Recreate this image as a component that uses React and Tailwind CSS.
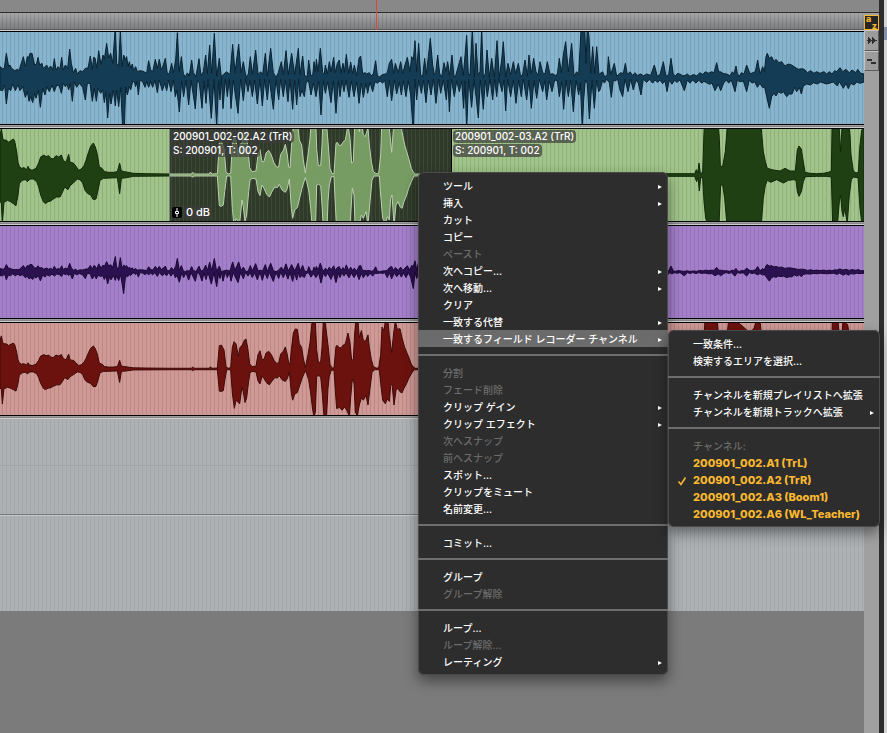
import { useMemo } from "react";
import clsx from "clsx";

// Envelopes are sampled at three units per pixel. Each list holds "x,y" pairs.
const parse = (text, start, mid) =>
  text
    .trim()
    .split(/\s+/)
    .map((pair) => {
      const [x, y] = pair.split(",").map(Number);
      return [x + start, Math.abs(y - mid)];
    });

// Pulls the quiet samples towards the centre line so the peaks stand apart
const sharpen = ([x, h]) => [x, x > 500 && x < 2260 && h < 36 ? h * 0.55 : h];

const VOICE_TOP = [
  ...parse(
    `0,200 8,206 13,205 19,160 26,200 30,195 34,204 44,212 52,208 57,212 70,170 76,200 82,170 86,172 90,160 96,160
     100,178 104,196 110,190 114,172 119,195 126,190 130,206 140,195 145,206 152,198 158,210 163,176 168,210 174,200
     180,206 185,172 190,210 196,195 203,205 209,147 214,190 220,218 227,205 232,222 240,212 248,215 256,205 264,204
     271,168 277,208 281,172 285,174 291,205 296,152 303,194 309,165 313,178 320,130 326,174 332,160 338,190 346,80
     350,190 356,200 361,90 366,200 371,165 376,178 380,170 384,200 388,185 392,205 397,192 401,212 407,200 412,215
     420,212 430,214 440,220 446,182 452,210 458,215 466,178 472,205 478,178 484,210 490,195 496,175 502,212 508,210
     515,190 520,205 527,180 532,98 538,200 544,170 550,210 556,228 562,206 568,222 575,180 580,205 588,225 597,176
     603,220 610,200 617,165 622,210 629,135 635,210 643,100 650,225 658,175 664,230 670,215 680,200 690,215 698,133
     705,205 716,132 723,205 730,185 738,230 745,212 751,170 757,215 767,150 774,215 782,200 788,215 796,160 802,225
     812,145 820,205 828,230 835,205 844,185 850,215 858,152 865,215 875,160 884,215 895,145`,
    0, 234
  ),
  ...parse(
    `0,215 8,168 14,220 22,228 26,180 32,218 38,222 42,185 46,200 49,178 54,200 61,145 68,205 73,212 76,195 82,212
     88,185 93,200 101,172 106,205 112,190 118,180 123,208 129,190 133,205 139,163 146,210 152,186 158,210 163,195
     170,220 177,175 182,168 188,210 195,205 200,212 208,205 213,222 220,212 227,182 232,220 238,228 248,215 256,212
     262,205 268,190 275,178 281,210 286,190 295,205 302,185 308,210 315,195 322,172 330,200 335,170 340,180 345,122
     350,200 356,130 362,218 368,225 374,175 379,215 385,170 391,115 398,195 403,215 407,205 413,165 419,210 425,228
     432,188 438,200 443,185 449,220 456,165 462,230 468,215 476,195 483,170 490,220 500,106 505,215 510,215 517,85
     523,230 528,130 534,215 540,200 545,85 550,232 556,210 561,150 568,230 575,175 583,230 591,122 598,230 605,180
     610,125 617,230 624,190 632,215 640,185 647,210 655,190 661,215 667,225 675,180 682,225 687,165 694,210 701,175
     708,200 714,220 720,185 728,205 735,212 742,185 750,215 758,210 765,220 772,215 778,175 784,205 790,165 797,125
     805,200 815,130 822,225 830,200 836,215 843,90 849,80 854,80 858,190 862,80 867,110 872,210 878,140 884,210
     890,140 897,215`,
    900, 234
  ),
  ...parse(
    `0,210 8,200 14,228 22,215 25,170 32,215 43,190 50,225 62,205 70,210 76,190 82,215 90,200 98,220 105,205 112,220
     122,212 130,222 140,212 152,220 163,195 172,225 180,215 190,185 198,225 206,215 213,175 220,215 226,222 232,210
     240,212 248,222 255,220 262,212 270,225 280,215 290,222 300,205 308,215 316,200 325,208 335,200 342,205 350,188
     356,200 362,200 370,210 380,212 390,222 397,200 402,212 408,198 412,210 418,225 424,205 432,212 440,195 450,212
     458,205 466,215 473,180 480,222 488,200 493,215 498,170 502,160 508,175 515,170 522,185 528,178 536,188 545,185
     555,198 565,192 575,195 585,202 595,208 605,206 613,208 622,218 632,212 642,220 650,215 660,220 672,215 680,222
     688,215 696,222 704,212 710,215 720,203 728,215 738,208 748,218 756,210 768,218 773,208 782,220 792,222`,
    1800, 234
  ),
].map(sharpen);

const VOICE_BOTTOM = [
  ...parse(
    `0,270 8,272 14,255 19,312 25,265 32,272 38,252 46,272 54,254 60,272 68,260 76,292 82,275 87,304 92,290 98,308
     104,280 108,295 115,270 121,322 128,265 135,285 140,260 148,275 156,255 163,275 170,255 178,258 184,280 190,250
     196,260 201,252 206,270 211,250 217,304 223,245 230,262 238,250 248,262 256,300 262,250 270,250 277,304 283,265
     289,304 294,265 302,280 308,270 313,308 318,275 323,354 329,280 333,312 340,270 346,318 350,270 356,320 362,262
     371,450 377,260 382,285 388,260 392,270 398,245 403,245 407,260 411,245 415,285 420,240 428,245 435,262 440,245
     446,262 452,245 458,262 465,240 472,278 478,240 487,272 494,250 500,272 506,245 513,275 520,245 526,290 531,270
     538,336 545,250 551,290 558,245 566,315 573,245 579,280 586,327 592,245 598,262 606,325 612,250 618,310 624,240
     634,355 642,240 650,380 656,250 660,300 664,236 669,326 676,240 682,290 688,240 693,326 700,245 706,285 714,340
     722,240 730,302 737,238 744,275 750,245 757,290 764,245 772,312 780,240 787,318 794,240 802,300 808,240 820,328
     828,240 836,300 842,240 850,290 856,245 864,305 870,240 878,328 884,245 890,315 896,240`,
    0, 234
  ),
  ...parse(
    `0,290 6,270 13,290 18,262 25,245 33,285 40,262 48,290 56,250 63,345 70,250 76,280 83,255 93,308 100,250 108,340
     115,250 120,290 126,245 132,275 138,245 147,292 154,250 162,290 170,255 177,310 184,262 190,292 198,260 203,280
     210,255 218,275 225,255 232,262 240,250 248,262 254,245 262,290 268,245 275,302 283,245 290,282 298,255 304,285
     310,250 318,290 325,250 332,285 340,400 345,240 350,300 356,245 364,280 370,245 378,308 385,245 393,285 400,240
     408,310 416,240 422,280 430,245 439,300 444,245 448,335 454,240 463,290 470,250 478,275 485,250 491,325 495,250
     500,390 506,240 515,322 522,240 528,290 535,354 541,245 550,328 556,245 562,290 570,236 578,300 584,240 590,290
     596,236 606,275 612,245 617,333 623,240 632,290 640,245 648,310 656,245 664,290 670,240 680,300 687,245 694,325
     702,245 710,295 718,240 728,275 734,250 740,300 748,250 756,275 764,245 772,250 778,290 785,255 791,328 798,245
     805,290 812,245 820,335 828,245 836,285 841,260 847,390 851,300 856,245 862,265 868,357 876,245 883,325 890,245
     896,275`,
    900, 234
  ),
  ...parse(
    `0,270 8,245 13,262 20,240 28,260 34,292 40,245 46,250 53,240 60,270 68,290 75,240 84,275 92,240 100,270 108,245
     115,262 123,285 130,240 140,258 148,242 158,262 165,245 173,258 180,245 188,265 195,250 201,275 208,245 216,268
     224,245 230,258 240,245 253,272 262,245 270,262 278,245 288,262 296,245 305,262 312,252 320,260 328,268 336,262
     345,272 355,268 362,272 372,258 380,245 386,262 394,245 405,275 412,245 420,255 430,250 440,275 448,245 456,262
     464,245 472,262 480,250 487,262 494,262 500,290 508,325 515,290 522,280 528,288 535,275 543,280 550,275 560,290
     568,282 576,282 584,262 590,275 598,262 604,282 610,258 620,252 632,255 640,248 652,252 662,246 680,252 700,246
     712,258 718,245 730,265 738,250 745,266 752,250 762,255 770,246 780,250 792,246`,
    1800, 234
  ),
].map(sharpen);

const FIELD_TOP = [
  ...parse(
    `0,120 4,138 9,106 20,104 26,98 34,104 40,108 44,102 50,70 54,38 58,26 64,20 72,22 80,16 84,26 88,18 96,14 108,20
     116,36 122,54 132,60 138,55 146,58 152,50 160,48 168,58 176,54 184,60 190,44 198,38 206,62 210,38 220,36 228,26
     236,14 244,18 252,28 258,44 266,70 272,86 280,96 286,84 292,62 298,24 306,20 314,10 326,8 340,8 352,10 359,36
     364,12 374,10 384,8 400,5 440,4 508,3 574,3 577,7 580,7 583,3 628,3 631,9 636,3 652,4 658,97 664,100 672,80
     678,10 684,3 692,5 697,90 702,114 708,105 715,54 720,90 727,100 733,120 738,125 743,90 749,22 756,10 768,12
     774,60 780,76 786,40 792,40 798,66 806,74 814,60 822,36 830,24 836,24 842,62 850,74 856,92 862,60 866,24 870,22
     874,80 880,150 886,167 892,165 898,105`,
    0, 0
  ),
  ...parse(
    `5,90 10,45 16,6 24,60 30,110 36,195 46,200 50,80 55,28 62,28 66,90 70,195 76,190 84,100 90,20 96,4 102,4 108,95
     112,98 118,88 124,90 130,100 136,105 144,150 150,110 155,36 160,40 164,150 168,200 174,200 178,130 184,160
     190,120 196,115 204,142 208,90 214,40 220,10 228,4 236,4 242,60 246,175 252,160 256,200 264,200 268,140 275,68
     281,150 286,200 292,165 300,168 306,130 314,90 320,70 326,50 334,20 340,8 346,3 355,3`,
    900, 0
  ),
  ...parse(
    `204,4 284,4 289,16 293,6 297,36 301,6 308,6 312,130 315,205 351,205 358,110 361,26 368,26 376,70 382,150 386,205
     405,200 422,185 438,165 450,150 462,170 470,205 480,205 485,125 490,70 496,40 502,20 520,15 540,12 555,20 570,12
     586,12 592,76 597,87 604,78 610,40 615,8 630,5 650,4 670,5 685,8 694,12 697,200 714,200 722,70 729,200 743,185
     750,120 753,60 760,12 768,6 775,8 779,80 785,135 792,140`,
    1800, 0
  ),
];

const FIELD_BOTTOM = [
  ...parse(
    `0,80 4,84 7,146 12,82 22,76 32,80 40,86 48,92 54,60 58,26 66,16 76,14 82,20 90,12 100,12 110,20 116,36 122,60
     130,80 136,86 144,80 152,78 160,72 170,66 180,66 188,50 194,36 204,44 210,32 220,24 232,12 240,14 248,24 256,48
     264,56 272,60 280,74 288,72 294,46 300,16 310,10 352,8 359,56 364,10 380,8 400,4 508,3 574,3 578,7 582,3 652,3
     658,92 664,94 670,90 674,50 680,3 692,3 697,100 703,164 708,130 714,138 719,145 726,75 730,95 735,140 740,120
     746,50 750,15 756,10 768,12 774,50 780,62 786,30 792,40 800,58 808,66 816,50 824,36 832,38 838,28 846,45 856,52
     862,40 868,12 874,100 878,130 884,105 892,98`,
    0, 0
  ),
  ...parse(
    `0,65 6,40 12,20 16,8 20,20 26,45 32,100 38,170 42,200 46,180 50,30 56,28 62,32 66,90 72,195 80,190 84,80 88,30
     94,5 102,5 106,90 110,165 118,160 126,172 134,158 140,172 148,195 152,120 157,40 162,60 166,180 172,195 178,150
     184,120 190,130 198,110 204,150 210,80 216,15 222,3 238,3 242,60 248,130 256,145 262,125 268,135 272,70 276,60
     282,150 288,90 294,80 300,95 306,100 312,80 320,60 326,40 334,20 342,3 355,3`,
    900, 0
  ),
  ...parse(
    `204,4 284,4 290,20 294,6 298,48 302,8 308,8 312,80 317,130 322,145 357,150 362,30 368,30 374,70 380,140 484,145
     490,70 496,30 502,16 512,22 530,14 550,24 565,16 580,14 588,16 592,50 597,64 604,50 610,20 616,5 650,4 680,4
     694,6 698,150 712,150 718,80 722,60 726,110 730,125 734,100 742,145 748,60 754,14 760,6 774,8 780,100 786,150
     792,150`,
    1800, 0
  ),
];

const stripes =
  "bg-[repeating-linear-gradient(90deg,transparent_0_2px,#0000001b_2px_3px,transparent_3px_4px)]";

const emptyStripes =
  "bg-[repeating-linear-gradient(90deg,transparent_0_2px,#8d9cae66_2px_3px,transparent_3px_4px)]";

function Waveform({ top, bottom, scale = 1, from = 0, to = 2592, className }) {
  const d = useMemo(() => {
    const up = top.map(([x, h]) => `${x},${138 - h * scale}`);
    const down = [...bottom].reverse().map(([x, h]) => `${x},${138 + h * scale}`);
    return `M${[...up, ...down].join("L")}Z`;
  }, [top, bottom, scale]);

  return (
    <svg
      viewBox={`${from} 0 ${to - from} 276`}
      preserveAspectRatio="none"
      className="block h-full w-full"
      aria-hidden="true"
    >
      <path d={d} className={className} strokeWidth="1" vectorEffect="non-scaling-stroke" />
    </svg>
  );
}

function Tag({ children }) {
  return <span className="rounded-sm bg-[#3c3c3c]/70 px-0.5">{children}</span>;
}

function ClipLabel({ name, take }) {
  return (
    <div className="absolute left-0 top-0 flex flex-col items-start gap-px pl-px pt-px text-[10px] font-medium leading-[13px] whitespace-nowrap text-white">
      <Tag>{name}</Tag>
      <Tag>{take}</Tag>
    </div>
  );
}

function Lane({ className, children }) {
  return (
    <div>
      <div className={clsx("flex h-[94px] border-y border-black", className)}>{children}</div>
      <div className="h-[3px] border-b border-[#cccccc] bg-linear-to-b from-[#a6a6a6] to-[#7c7c7c]" />
    </div>
  );
}

function Timeline() {
  return (
    <main className="min-w-0 flex-1">
      <div className="relative">
        <div className="h-3 bg-[#888888]" />
        <div className="h-[18px] border-t border-b border-t-[#2c2c2c] border-b-[#5a5a5a] bg-linear-to-b from-[#a4a6a8] to-[#7c7e80]">
          <div className={clsx("h-full", stripes)} />
        </div>
        <div className="absolute left-[376px] top-0 h-[30px] w-px bg-[#e0453c]" />
      </div>
      <div className="h-px bg-[#d0d0d0]" />

      <Lane className={clsx("bg-[#87b5cf]", stripes)}>
        <Waveform top={VOICE_TOP} bottom={VOICE_BOTTOM} className="fill-[#143c54] stroke-[#0a2230]" />
      </Lane>

      <Lane className={clsx("bg-[#a0c48a]", stripes)}>
        <div className="w-[169px]">
          <Waveform top={FIELD_TOP} bottom={FIELD_BOTTOM} to={507} className="fill-[#1f4013] stroke-[#12280a]" />
        </div>
        <div className="relative w-[282px] border-l border-[#77807a] bg-[#2f3a29]">
          <div className="h-full bg-[repeating-linear-gradient(90deg,transparent_0_1px,#ffffff12_1px_2px,transparent_2px_4px)]">
            <Waveform
              top={FIELD_TOP}
              bottom={FIELD_BOTTOM}
              from={510}
              to={1353}
              className="fill-[#769b63] stroke-[#bcd0b0]"
            />
          </div>
          <ClipLabel name="200901_002-02.A2 (TrR)" take="S: 200901, T: 002" />
          <div className="absolute bottom-0.5 left-0.5 flex items-center gap-0.5 text-[11px] font-medium leading-[13px] text-white">
            <svg viewBox="0 0 10 11" className="h-[11px] w-2.5 rounded-xs bg-black" aria-hidden="true">
              <path d="M5 1v3M5 7v3M3.500 4.500h3v2h-3z" className="fill-none stroke-white" />
            </svg>
            <Tag>0 dB</Tag>
          </div>
        </div>
        <div className="relative min-w-0 flex-1 border-l border-black">
          <Waveform
            top={FIELD_TOP}
            bottom={FIELD_BOTTOM}
            from={1356}
            className="fill-[#1f4013] stroke-[#12280a]"
          />
          <ClipLabel name="200901_002-03.A2 (TrR)" take="S: 200901, T: 002" />
        </div>
      </Lane>

      <Lane className={clsx("bg-[#a47fcb]", stripes)}>
        <Waveform top={VOICE_TOP} bottom={VOICE_BOTTOM} scale={0.3} className="fill-[#2c1150] stroke-[#1a0832]" />
      </Lane>

      <Lane className={clsx("bg-[#d09996]", stripes)}>
        <Waveform top={FIELD_TOP} bottom={FIELD_BOTTOM} scale={0.72} className="fill-[#6c120e] stroke-[#3c0a08]" />
      </Lane>

      <div className={clsx("h-24 border-b border-[#777a7c] bg-[#aeb0b1]", emptyStripes)}>
        <div className="h-[47px] border-b border-[#a0a2a4]" />
      </div>
      <div className={clsx("h-24 border-t border-[#c4c6c7] bg-[#aeb0b1]", emptyStripes)} />
    </main>
  );
}

function SideBar() {
  return (
    <aside className="w-[15px] shrink-0 bg-[#a0a0a0]">
      <div className="h-3 bg-[#888888]" />
      <div className="h-[3px] border-t border-[#2c2c2c]" />
      <button
        aria-label="Sort"
        className="flex h-[15px] w-full justify-between border border-[#f5b52c] bg-[#262626] px-px text-[9px] font-extrabold leading-[6px] text-[#f5b52c]"
      >
        <span>a</span>
        <span className="self-end">z</span>
      </button>
      <button
        aria-label="Transients"
        className="block h-[21px] w-full border border-[#c4c4c4] border-b-[#5c5c5c] border-r-[#5c5c5c] bg-[#9c9c9c]"
      >
        <svg viewBox="0 0 13 19" className="block w-full" aria-hidden="true">
          <path d="M2 9.500h10M3.500 6v7M4.500 7v5M5.500 8v3M7.500 6v7M8.500 7v5M9.500 8v3" className="stroke-[#303030]" />
        </svg>
      </button>
      <button
        aria-label="Layered editing"
        className="block h-5 w-full border border-[#c4c4c4] border-b-[#5c5c5c] border-r-[#5c5c5c] bg-[#9c9c9c]"
      >
        <svg viewBox="0 0 13 18" className="block w-full" aria-hidden="true">
          <path d="M2 7h5v2H2zM6 10h5v2H6z" className="fill-[#303030]" />
        </svg>
      </button>
    </aside>
  );
}

const clipMenu = [
  [
    { label: "ツール", sub: true },
    { label: "挿入", sub: true },
    { label: "カット" },
    { label: "コピー" },
    { label: "ペースト", disabled: true },
    { label: "次へコピー...", sub: true },
    { label: "次へ移動...", sub: true },
    { label: "クリア" },
    { label: "一致する代替", sub: true },
    { label: "一致するフィールド レコーダー チャンネル", sub: true, active: true },
  ],
  [
    { label: "分割", disabled: true },
    { label: "フェード削除", disabled: true },
    { label: "クリップ ゲイン", sub: true },
    { label: "クリップ エフェクト", sub: true },
    { label: "次へスナップ", disabled: true },
    { label: "前へスナップ", disabled: true },
    { label: "スポット..." },
    { label: "クリップをミュート" },
    { label: "名前変更..." },
  ],
  [{ label: "コミット..." }],
  [{ label: "グループ" }, { label: "グループ解除", disabled: true }],
  [
    { label: "ループ..." },
    { label: "ループ解除...", disabled: true },
    { label: "レーティング", sub: true },
  ],
];

const channelMenu = [
  [{ label: "一致条件..." }, { label: "検索するエリアを選択..." }],
  [
    { label: "チャンネルを新規プレイリストへ拡張" },
    { label: "チャンネルを新規トラックへ拡張", sub: true },
  ],
  [
    { label: "チャンネル:", disabled: true },
    { label: "200901_002.A1 (TrL)", channel: true },
    { label: "200901_002.A2 (TrR)", channel: true, checked: true },
    { label: "200901_002.A3 (Boom1)", channel: true },
    { label: "200901_002.A6 (WL_Teacher)", channel: true },
  ],
];

function MenuItem({ item }) {
  return (
    <button
      role="menuitem"
      disabled={item.disabled}
      className={clsx(
        "relative flex h-[17px] w-full items-center justify-between pl-[25px] pr-1.5 pt-0.5 text-left whitespace-nowrap",
        item.active && "bg-[#6b6b6b]",
        item.disabled && "text-[#6c6c6c]",
        item.channel ? "text-[11px] font-extrabold text-[#f9b82f]" : "text-[10px] font-medium"
      )}
    >
      {item.checked && (
        <svg viewBox="0 0 10 10" className="absolute left-[9px] h-2.5 w-2.5" aria-hidden="true">
          <path d="M1.500 5.500L4 8.500L8.500 1.500" className="fill-none stroke-[#f9b82f]" strokeWidth="1.6" />
        </svg>
      )}
      <span>{item.label}</span>
      {item.sub && (
        <svg viewBox="0 0 4 4" className="h-1 w-1" aria-hidden="true">
          <path d="M0 0L4 2L0 4Z" className="fill-white" />
        </svg>
      )}
    </button>
  );
}

function Menu({ groups, className }) {
  return (
    <div
      role="menu"
      className={clsx(
        "absolute rounded-md bg-[#2d2d2d] py-[5px] text-white shadow-[inset_0_0_0_1px_#4a4a4a,0_6px_14px_#00000070]",
        className
      )}
    >
      {groups.map((group, index) => (
        <div key={index}>
          {index > 0 && (
            <div className="h-[17px] pt-[7px]" role="separator">
              <div className="h-0.5 w-full bg-[#6e6e6e]" />
            </div>
          )}
          {group.map((item) => (
            <MenuItem key={item.label} item={item} />
          ))}
        </div>
      ))}
    </div>
  );
}

export default function App() {
  return (
    <div className="relative flex min-h-screen overflow-hidden bg-[#7b7b7b] font-[Inter,'Noto_Sans_CJK_JP',sans-serif]">
      <Timeline />
      <SideBar />
      <div className="w-[5px] shrink-0 bg-[#2c2c2c]" />
      <div className="w-[3px] shrink-0 bg-[#d6d6d6] pt-[27px]">
        <div className="h-[13px] bg-[#8492ac]" />
      </div>
      <Menu groups={clipMenu} className="left-[418px] top-[172px] w-[250px]" />
      <Menu groups={channelMenu} className="left-[668px] top-[330px] w-[212px]" />
    </div>
  );
}
